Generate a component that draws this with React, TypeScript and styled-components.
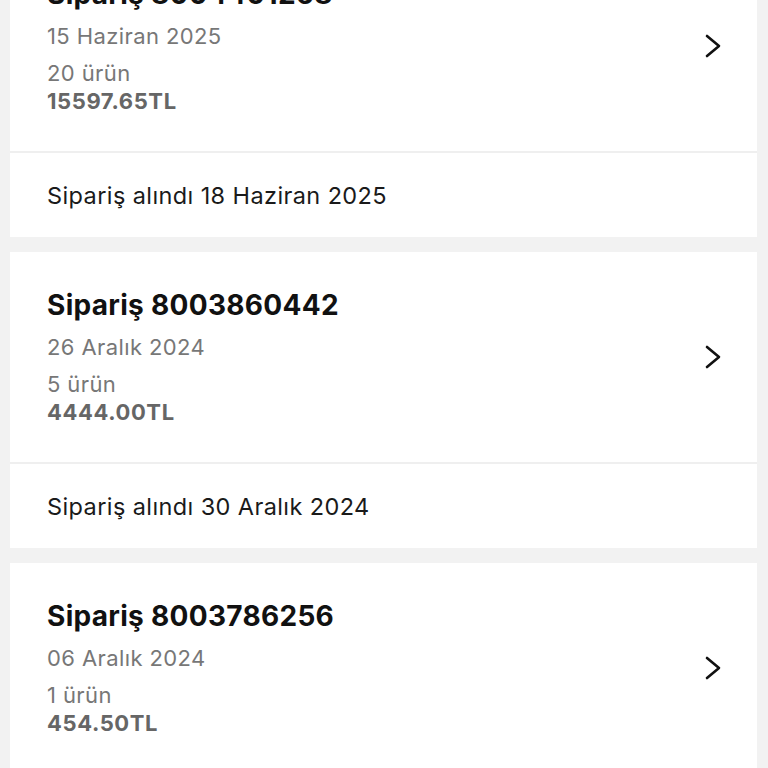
import React, { FC } from 'react';
import styled, { createGlobalStyle } from 'styled-components';

interface Order {
  id: string;
  date: string;
  count: number;
  total: string;
  received: string;
}

const orders: Order[] = [
  { id: '8004401268', date: '15 Haziran 2025', count: 20, total: '15597.65TL', received: '18 Haziran 2025' },
  { id: '8003860442', date: '26 Aralık 2024', count: 5, total: '4444.00TL', received: '30 Aralık 2024' },
  { id: '8003786256', date: '06 Aralık 2024', count: 1, total: '454.50TL', received: '' },
];

const GlobalStyle = createGlobalStyle`
  html, body {
    margin: 0;
    padding: 0;
    background: #f2f2f2;
    font-family: Inter, 'Liberation Sans', sans-serif;
    overflow: hidden;
  }
`;

const Page = styled.div`
  height: 768px;
  overflow: hidden;
`;

// list is scrolled a bit, first card's title sits above the viewport
const List = styled.div`
  display: flex;
  flex-direction: column;
  gap: 15px;
  margin: -59px 11px 0 10px;
`;

const Card = styled.div`
  display: flex;
  flex-direction: column;
  gap: 2px;
  background: #efefef;
`;

const Summary = styled.div`
  display: flex;
  align-items: center;
  justify-content: space-between;
  background: #fff;
  padding: 37px 36px 37px 37px;
`;

const Info = styled.div`
  display: flex;
  flex-direction: column;
`;

const Title = styled.div`
  font-size: 28px;
  line-height: 32px;
  font-weight: 700;
  letter-spacing: 0.3px;
  color: #111;
  margin-bottom: 13px;
`;

const Meta = styled.div<{ $gap?: number }>`
  font-size: 22px;
  line-height: 26px;
  letter-spacing: 0.4px;
  color: #777;
  margin-top: ${p => p.$gap ?? 0}px;
`;

const Total = styled.div`
  font-size: 22px;
  line-height: 26px;
  font-weight: 700;
  letter-spacing: 0.6px;
  color: #666;
  margin-top: 2px;
`;

const Footer = styled.div`
  display: flex;
  align-items: center;
  height: 84px;
  padding-left: 37px;
  background: #fff;
  font-size: 23.5px;
  letter-spacing: 0.4px;
  color: #1a1a1a;
`;

const Chevron = () => (
  <svg width="16" height="24" viewBox="0 0 16 24" fill="none">
    <polyline
      points="2,2 14,12 2,22"
      stroke="#111"
      strokeWidth="2.6"
      strokeLinecap="round"
      strokeLinejoin="round"
    />
  </svg>
);

const OrderCard: FC<{ order: Order }> = ({ order }) => (
  <Card>
    <Summary>
      <Info>
        <Title>Sipariş {order.id}</Title>
        <Meta>{order.date}</Meta>
        <Meta $gap={11}>{order.count} ürün</Meta>
        <Total>{order.total}</Total>
      </Info>
      <Chevron />
    </Summary>
    {order.received && <Footer>Sipariş alındı {order.received}</Footer>}
  </Card>
);

const App: FC = () => (
  <Page>
    <GlobalStyle />
    <List>
      {orders.map(order => (
        <OrderCard key={order.id} order={order} />
      ))}
    </List>
  </Page>
);

export default App;
